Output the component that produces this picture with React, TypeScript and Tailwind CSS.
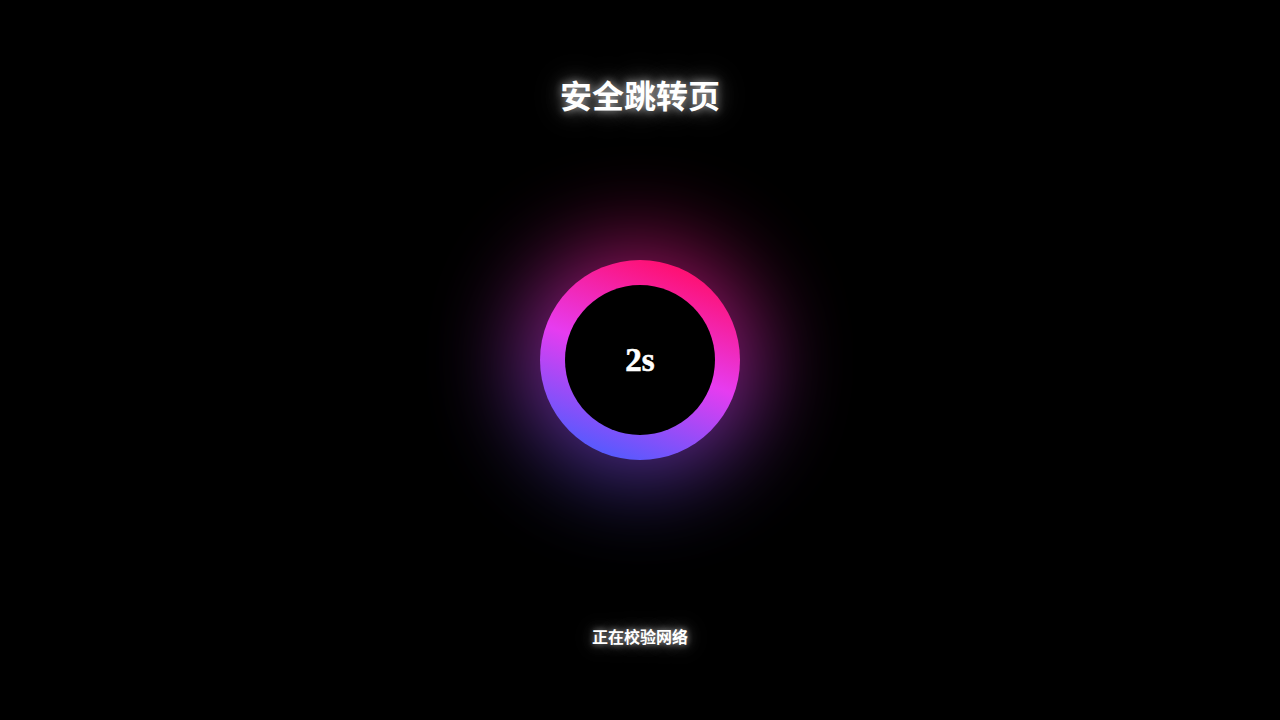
import React from "react";

export default function App() {
  const font = { fontFamily: '"Liberation Serif", "Noto Sans CJK SC", serif' };
  return (
    <div className="w-full h-[720px] bg-black flex flex-col items-center overflow-hidden" style={font}>
      <h1 className="mt-[77px] text-[32px] leading-[40px] font-bold text-white [text-shadow:0_0_8px_rgba(255,255,255,0.6),0_0_20px_rgba(255,255,255,0.35),0_0_36px_rgba(255,255,255,0.2)]">
        安全跳转页
      </h1>
      <div className="relative mt-[143px] w-[200px] h-[200px]">
        <div className="absolute -inset-[20px] rounded-full bg-[linear-gradient(195deg,#ff0f6f_10%,#e63cf0_50%,#4d5cff_92%)] blur-[45px] opacity-60" />
        <div className="relative w-full h-full rounded-full bg-[linear-gradient(200deg,#ff0f6f_10%,#e63cf0_50%,#4d5cff_92%)] flex items-center justify-center">
          <div className="w-[150px] h-[150px] rounded-full bg-black flex items-center justify-center">
            <span className="text-[33px] leading-none font-extrabold text-white font-['Liberation_Serif',serif] [-webkit-text-stroke:0.6px_white]">2s</span>
          </div>
        </div>
      </div>
      <p className="mt-[166px] text-[16px] leading-[24px] font-bold text-white [text-shadow:0_0_6px_rgba(255,255,255,0.6),0_0_16px_rgba(255,255,255,0.35),0_0_28px_rgba(255,255,255,0.2)]">
        正在校验网络
      </p>
    </div>
  );
}
